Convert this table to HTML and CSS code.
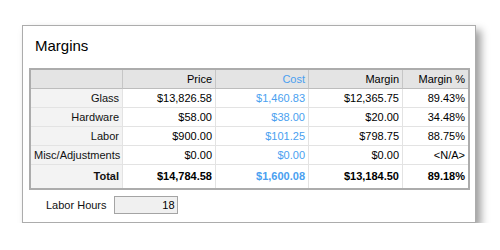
FILE: index.html
```html
<!DOCTYPE html>
<html>
<head>
<meta charset="utf-8">
<link rel="stylesheet" href="styles.css">
</head>
<body>
<div class="panel">
  <h1 class="title">Margins</h1>
  <table class="grid">
    <thead>
      <tr>
        <th class="c-label"></th>
        <th class="c-price">Price</th>
        <th class="c-cost cost">Cost</th>
        <th class="c-margin">Margin</th>
        <th class="c-pct">Margin %</th>
      </tr>
    </thead>
    <tbody>
      <tr>
        <td class="label">Glass</td>
        <td>$13,826.58</td>
        <td class="cost">$1,460.83</td>
        <td>$12,365.75</td>
        <td class="last">89.43%</td>
      </tr>
      <tr>
        <td class="label">Hardware</td>
        <td>$58.00</td>
        <td class="cost">$38.00</td>
        <td>$20.00</td>
        <td class="last">34.48%</td>
      </tr>
      <tr>
        <td class="label">Labor</td>
        <td>$900.00</td>
        <td class="cost">$101.25</td>
        <td>$798.75</td>
        <td class="last">88.75%</td>
      </tr>
      <tr>
        <td class="label">Misc/Adjustments</td>
        <td>$0.00</td>
        <td class="cost">$0.00</td>
        <td>$0.00</td>
        <td class="last">&lt;N/A&gt;</td>
      </tr>
      <tr class="total">
        <td class="label">Total</td>
        <td>$14,784.58</td>
        <td class="cost">$1,600.08</td>
        <td>$13,184.50</td>
        <td class="last">89.18%</td>
      </tr>
    </tbody>
  </table>
  <div class="hours">
    <label class="hours-label" for="hours">Labor Hours</label>
    <input id="hours" class="hours-input" type="text" value="18" readonly>
  </div>
</div>
</body>
</html>
```

FILE: styles.css
```css
html, body {
  margin: 0;
  padding: 0;
  background: #ffffff;
}

body {
  font-family: "Liberation Sans", Arial, sans-serif;
  font-size: 11px;
  color: #000000;
}

.panel {
  margin: 25px 0 0 22px;
  width: 452px;
  border: 1px solid #acacac;
  background: #ffffff;
  box-shadow: 5px 5px 8px rgba(0, 0, 0, 0.38);
  padding: 11px 0 8px 0;
}

.title {
  margin: 0 0 14px 12px;
  font-size: 15px;
  font-weight: normal;
  line-height: 17px;
  color: #000000;
}

.grid {
  margin-left: 6px;
  border-collapse: separate;
  border-spacing: 0;
  border: 2px solid #acacac;
  table-layout: fixed;
  width: 441px;
}

.grid th,
.grid td {
  box-sizing: border-box;
  padding: 0 3px 0 3px;
  text-align: right;
  white-space: nowrap;
  line-height: 18px;
  height: 19px;
  border-right: 1px solid #e3e3e3;
  border-bottom: 1px solid #e3e3e3;
  font-weight: normal;
}

.grid th {
  background: #e4e4e4;
  border-right: 1px solid #c6c6c6;
  border-bottom: 1px solid #bdbdbd;
}

.grid .c-label { width: 92px; }
.grid .c-price { width: 93px; }
.grid .c-cost { width: 93px; }
.grid .c-margin { width: 94px; }
.grid .c-pct { width: 65px; border-right: none; }

.grid td.last { border-right: none; }

.grid td.label {
  background: #f3f3f3;
  color: #111111;
}

.grid .cost {
  color: #4a9ff0;
}

.grid tr.total td {
  font-weight: bold;
  height: 23px;
  line-height: 23px;
  border-bottom: none;
}

.hours {
  display: flex;
  align-items: center;
  margin-top: 6px;
  padding-left: 23px;
  gap: 7px;
}

.hours-label {
  color: #111111;
  font-size: 11px;
}

.hours-input {
  box-sizing: border-box;
  width: 64px;
  height: 18px;
  margin: 0;
  padding: 0 2px 0 0;
  border: 1px solid #a4a4a4;
  background: #f0f0f0;
  font-family: "Liberation Sans", Arial, sans-serif;
  font-size: 11px;
  text-align: right;
  color: #000000;
  outline: none;
}
```
